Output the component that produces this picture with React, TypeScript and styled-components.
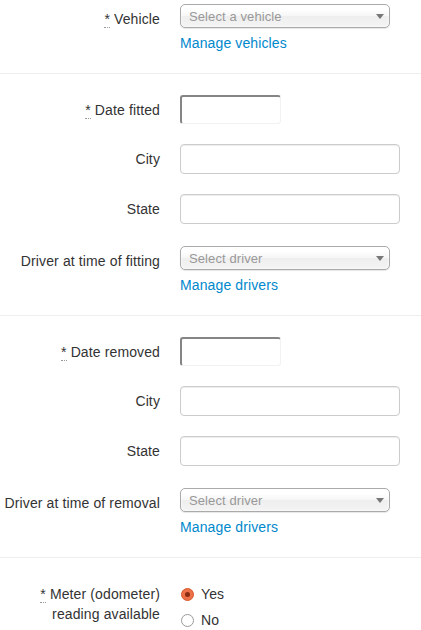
import React from "react";
import styled, { createGlobalStyle } from "styled-components";

const GlobalStyle = createGlobalStyle`
  html, body { margin: 0; padding: 0; background: #fff; }
  body {
    font-family: "Liberation Sans", Arial, Helvetica, sans-serif;
    font-size: 14px;
    line-height: 20px;
    letter-spacing: 0.12px;
    color: #333;
  }
  * { box-sizing: border-box; }
`;

const Page = styled.form`
  padding-top: 4px;
  width: 421px;
`;

const Group = styled.div<{ $shift?: number }>`
  display: flex;
  align-items: flex-start;
  padding-top: ${(p) => p.$shift ?? 0}px;
  margin-bottom: 20px;
`;

const Label = styled.label`
  width: 160px;
  flex: 0 0 160px;
  padding-top: 5px;
  text-align: right;
  color: #333;
`;

const Req = styled.abbr`
  text-decoration: none;
  border-bottom: 1px dotted #999;
  cursor: help;
`;

const Controls = styled.div`
  margin-left: 20px;
  display: flex;
  flex-direction: column;
  align-items: flex-start;
`;

const TextInput = styled.input`
  width: 220px;
  height: 30px;
  padding: 4px 6px;
  font: inherit;
  color: #555;
  border: 1px solid #ccc;
  border-radius: 4px;
  background: #fff;
  box-shadow: inset 0 1px 1px rgba(0, 0, 0, 0.075);
  outline: none;
`;

const DateInput = styled.input`
  width: 101px;
  height: 29px;
  padding: 4px 6px;
  font: inherit;
  border-style: solid;
  border-width: 2px 1px 1px 2px;
  border-color: #858585 #f2f2f2 #f2f2f2 #858585;
  border-radius: 3px;
  background: #fff;
  outline: none;
`;

const Chosen = styled.div`
  position: relative;
  width: 210px;
  height: 24px;
  padding-left: 8px;
  border: 1px solid #aaa;
  border-radius: 5px;
  background: linear-gradient(#fff 20%, #f6f6f6 50%, #eee 52%, #f4f4f4 100%);
  box-shadow: inset 0 0 3px #fff, 0 1px 1px rgba(0, 0, 0, 0.1);
  color: #999;
  font-size: 13px;
  line-height: 23px;
  letter-spacing: 0.1px;
  white-space: nowrap;
  overflow: hidden;
`;

const Arrow = styled.span`
  position: absolute;
  right: 5px;
  top: 9px;
  width: 0;
  height: 0;
  border-left: 4px solid transparent;
  border-right: 4px solid transparent;
  border-top: 5px solid #777;
`;

const Link = styled.a`
  margin-top: 5px;
  color: #0088cc;
  text-decoration: none;
  cursor: pointer;
`;

const Divider = styled.hr`
  margin: 0 0 20px;
  border: 0;
  border-top: 1px solid #eee;
  border-bottom: 1px solid #fff;
`;

const RadioRow = styled.label<{ $first?: boolean }>`
  display: flex;
  align-items: center;
  gap: 7px;
  height: 20px;
  margin-top: ${(p) => (p.$first ? "5px" : "6px")};
  padding-left: 1px;
  color: #333;
  cursor: pointer;
`;

const RadioDot = styled.span<{ $checked?: boolean }>`
  width: 13px;
  height: 13px;
  border-radius: 50%;
  flex: 0 0 13px;
  display: flex;
  align-items: center;
  justify-content: center;
  border: 1px solid ${(p) => (p.$checked ? "#d9582b" : "#9a9a9a")};
  background: ${(p) => (p.$checked ? "#ec7148" : "#fff")};
  margin-top: 1px;
  &::after {
    content: "";
    display: ${(p) => (p.$checked ? "block" : "none")};
    width: 5px;
    height: 5px;
    border-radius: 50%;
    background: #8a2c12;
  }
`;

const Select = ({ placeholder }: { placeholder: string }) => (
  <Chosen>
    {placeholder}
    <Arrow />
  </Chosen>
);

const Required = ({ children }: { children: React.ReactNode }) => (
  <>
    <Req title="required">*</Req> {children}
  </>
);

const Section = ({ kind }: { kind: "fitted" | "removed" }) => (
  <>
    <Group>
      <Label>
        <Required>{kind === "fitted" ? "Date fitted" : "Date removed"}</Required>
      </Label>
      <Controls>
        <DateInput type="text" />
      </Controls>
    </Group>
    <Group>
      <Label>City</Label>
      <Controls>
        <TextInput type="text" />
      </Controls>
    </Group>
    <Group>
      <Label>State</Label>
      <Controls>
        <TextInput type="text" />
      </Controls>
    </Group>
    <Group $shift={2}>
      <Label>
        {kind === "fitted" ? "Driver at time of fitting" : "Driver at time of removal"}
      </Label>
      <Controls>
        <Select placeholder="Select driver" />
        <Link>Manage drivers</Link>
      </Controls>
    </Group>
  </>
);

export default function App() {
  return (
    <>
      <GlobalStyle />
      <Page>
        <Group>
          <Label>
            <Required>Vehicle</Required>
          </Label>
          <Controls>
            <Select placeholder="Select a vehicle" />
            <Link>Manage vehicles</Link>
          </Controls>
        </Group>
        <Divider />
        <Section kind="fitted" />
        <Divider />
        <Section kind="removed" />
        <Divider />
        <Group>
          <Label>
            <Required>Meter (odometer) reading available</Required>
          </Label>
          <Controls>
            <RadioRow $first>
              <RadioDot $checked />
              Yes
            </RadioRow>
            <RadioRow>
              <RadioDot />
              No
            </RadioRow>
          </Controls>
        </Group>
      </Page>
    </>
  );
}
